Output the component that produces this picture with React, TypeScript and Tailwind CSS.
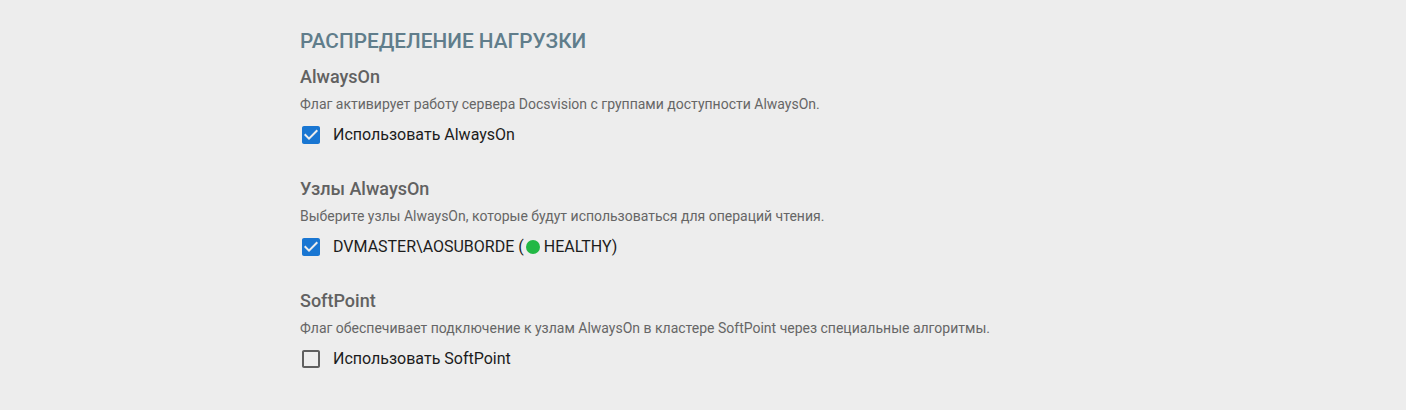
import React, { useState } from 'react';

type Option = {
    id: string;
    title: string;
    description: string;
    label: React.ReactNode;
    checked: boolean;
};

// MUI-like checkbox icon, 24px box with an 18px square inside
const Checkbox: React.FC<{ checked: boolean; onChange: () => void; children: React.ReactNode }> = ({ checked, onChange, children }) => (
    <label className="flex items-center gap-[10px] cursor-pointer select-none ml-[-1px]" onClick={onChange}>
        <svg width="24" height="24" viewBox="0 0 24 24" className="shrink-0">
            {checked ? (
                <path
                    fill="#1976d2"
                    d="M19 3H5c-1.11 0-2 .9-2 2v14c0 1.1.89 2 2 2h14c1.11 0 2-.9 2-2V5c0-1.1-.89-2-2-2zm-9 14l-5-5 1.41-1.41L10 14.17l7.59-7.59L19 8l-9 9z"
                />
            ) : (
                <path
                    fill="#5f5f5f"
                    d="M19 5v14H5V5h14m0-2H5c-1.1 0-2 .9-2 2v14c0 1.1.9 2 2 2h14c1.1 0 2-.9 2-2V5c0-1.1-.9-2-2-2z"
                />
            )}
        </svg>
        <span className="text-[16px] text-[#1c1c1c] leading-[24px]">{children}</span>
    </label>
);

export default function App() {
    const [options, setOptions] = useState<Option[]>([
        {
            id: 'alwayson',
            title: 'AlwaysOn',
            description: 'Флаг активирует работу сервера Docsvision с группами доступности AlwaysOn.',
            label: 'Использовать AlwaysOn',
            checked: true,
        },
        {
            id: 'nodes',
            title: 'Узлы AlwaysOn',
            description: 'Выберите узлы AlwaysOn, которые будут использоваться для операций чтения.',
            label: (
                <span className="inline-flex items-center whitespace-pre">
                    {'DVMASTER\\AOSUBORDE ('}
                    <span className="inline-block w-[14px] h-[14px] rounded-full bg-[#22b845] ml-[2px]" />
                    {' HEALTHY)'}
                </span>
            ),
            checked: true,
        },
        {
            id: 'softpoint',
            title: 'SoftPoint',
            description: 'Флаг обеспечивает подключение к узлам AlwaysOn в кластере SoftPoint через специальные алгоритмы.',
            label: 'Использовать SoftPoint',
            checked: false,
        },
    ]);

    const toggle = (id: string) =>
        setOptions(prev => prev.map(o => (o.id === id ? { ...o, checked: !o.checked } : o)));

    return (
        <div className="min-h-[410px] bg-[#ededed] pl-[300px] pt-[29px]" style={{ fontFamily: 'Roboto, "Noto Sans", sans-serif' }}>
            <h2 className="text-[20.8px] font-medium leading-[24px] text-[#607d8b] uppercase">Распределение нагрузки</h2>
            <div className="mt-[13px] flex flex-col gap-[31px]">
                {options.map(o => (
                    <div key={o.id}>
                        <div className="text-[18px] font-medium leading-[22px] text-[#616161]">{o.title}</div>
                        <div className="mt-[7px] text-[14px] leading-[18px] text-[#666666]">{o.description}</div>
                        <div className="mt-[10px]">
                            <Checkbox checked={o.checked} onChange={() => toggle(o.id)}>
                                {o.label}
                            </Checkbox>
                        </div>
                    </div>
                ))}
            </div>
        </div>
    );
}
